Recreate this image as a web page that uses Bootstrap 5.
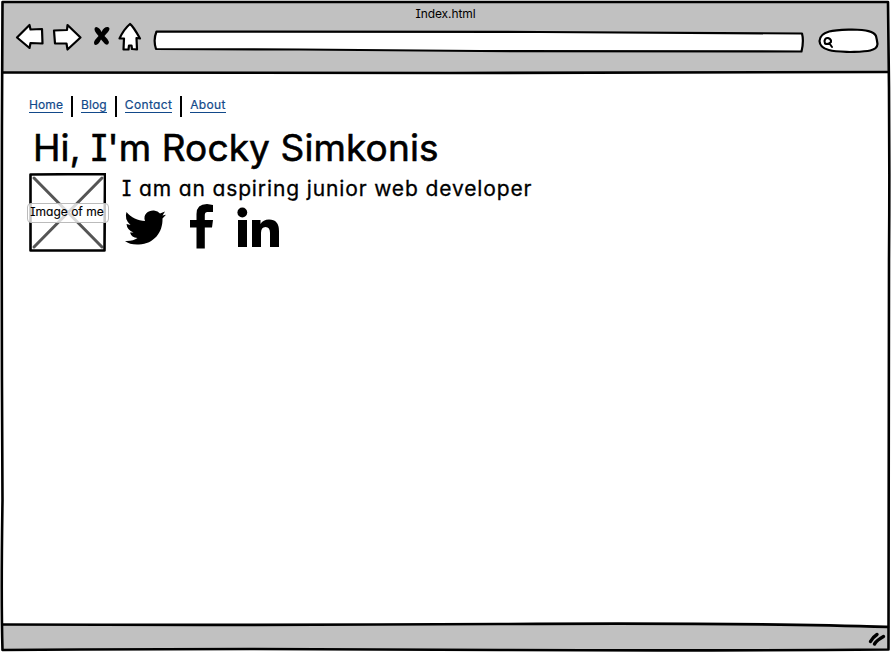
<!DOCTYPE html>
<html lang="en">
<head>
<meta charset="utf-8">
<meta name="viewport" content="width=device-width, initial-scale=1">
<title>Index.html</title>
<link href="https://cdn.jsdelivr.net/npm/bootstrap@5.3.0/dist/css/bootstrap.min.css" rel="stylesheet">
<style>
body{font-family:Inter,Lato,sans-serif;font-feature-settings:"cv11","cv08";color:#000;width:891px;height:652px;overflow:hidden;background:#fff}
svg{display:block;flex:none}
.ink{fill:none;stroke:#000;stroke-width:2.6;stroke-linejoin:round;stroke-linecap:round}
.paper{fill:#fff;stroke:#000;stroke-width:2.2;stroke-linejoin:round}
.lens{stroke-width:2}
.chrome-top{height:73px;background:#c1c1c1;padding:5px 0 0 14px}
.chrome-bottom{height:27px;background:#c1c1c1;padding:6px 4px 0 0}
.tab-title{font-size:12px;line-height:17px;letter-spacing:-.1px;margin-right:14px}
.page{padding:23px 27px 0 29px}
.site-nav{height:21px;font-size:12px;line-height:14px;-webkit-text-stroke:.2px #12498a}
.site-nav a{color:#12498a;text-decoration:none;border-bottom:1px solid #12498a;margin-top:2px;letter-spacing:.1px}
.site-nav a:nth-of-type(3){letter-spacing:.36px}
.site-nav a:nth-of-type(4){letter-spacing:.3px}
.bar{width:2px;height:21px;background:#000;margin:0 8px}
.headline{font-size:37px;line-height:44px;font-weight:400;letter-spacing:.12px;-webkit-text-stroke:.6px #000;margin:9px 0 3px 4px;white-space:nowrap}
.tagline{font-size:21px;line-height:31px;letter-spacing:.87px;-webkit-text-stroke:.3px #000;margin:0;white-space:nowrap}
.photo{width:77px;height:79px}
.photo-label{left:-2px;top:30px;width:82px;height:20px;border:1px solid #bbb;border-radius:4px;background:rgba(255,255,255,.78);font-size:12px;line-height:16px;padding-right:2px;-webkit-text-stroke:.15px #000;white-space:nowrap}
</style>
<script src="https://cdn.jsdelivr.net/npm/bootstrap@5.3.0/dist/js/bootstrap.bundle.min.js"></script>
</head>
<body class="position-relative d-flex flex-column">
<header class="chrome-top">
  <div class="tab-title text-center">Index.html</div>
    <svg width="870" height="34" viewBox="14 22 870 34">
      <path class="paper" d="M17 37.500 L29.500 25 L30.500 29.500 L42 29 L42.500 43.500 L30.500 43 L29.500 48 Z"/>
      <path class="paper" d="M54 30.500 L67 30 L67.500 25 L80.500 37.500 L67.500 49.500 L66.500 43.500 L55 43.500 Z"/>
      <path d="M96.500 27 Q100 28 101.500 32 Q104 26.500 108 27 Q111 28 108 32 Q105.500 34.500 104.500 36 Q107 38 109 42 Q108.500 46 105 44 L101 39.500 Q98.500 45 95 45 Q93 43 95 40 L98.500 36 Q93 30 95 27.500 Z"/>
      <path class="paper" d="M130 24 Q133 26 140 38.500 L136.500 38 L137 49.500 L132 49 L131.500 45.500 L129 45.500 L128.500 49.500 L123.500 49.500 L124 38.500 L119.500 38.500 Q124 29 130 24 Z"/>
      <path class="paper" d="M156.500 31.500 L540 32 L802 33.500 Q804 41 801.500 51.500 L480 51 L300 49.500 L156 49 Q153 40 156.500 31.500 Z"/>
      <path class="paper" d="M819.500 41 C820 29.500 838 30 852 29.500 C866 30 874 31 876 36 Q877 40 877.500 44 C877 52 864 51.500 850 52 C838 51.500 820 52 819.500 41 Z"/>
      <path class="ink lens" d="M824.500 41 Q825 37.700 828 38 Q831.500 39 831 42 Q828 45 825 43.500 Z M829.500 43.500 L832 47"/>
    </svg>
</header>
<main class="page flex-grow-1">
  <nav class="site-nav d-flex align-items-start">
    <a href="#">Home</a><span class="bar"></span>
    <a href="#">Blog</a><span class="bar"></span>
    <a href="#">Contact</a><span class="bar"></span>
    <a href="#">About</a>
  </nav>
  <h1 class="headline">Hi, I'm Rocky Simkonis</h1>
  <div class="d-flex">
    <div class="photo position-relative">
      <svg width="77" height="79" viewBox="29 173 77 79"><path d="M34 178 L102 247 M102 178 L34 247" stroke="#555" stroke-width="3" stroke-linecap="round"/><path class="ink" d="M30.500 174.500 L105 174 L104.500 250.500 L30.500 250.500 Z"/></svg>
      <div class="photo-label position-absolute text-center">Image of me</div>
    </div>
    <div class="ms-3">
      <p class="tagline">I am an aspiring junior web developer</p>
      <svg width="160" height="50" viewBox="122 204 160 50">
        <path d="M126.500 212 C131 218 138 220.500 145 221 C142.500 214 149 210 154 210.500 Q158 211 160 213.500 L165 211.500 L162.500 215.500 L166 214.800 L162.500 218.500 C163 232 154 244 139 244.500 Q130 245 125 241 Q133 241.500 137.500 238 Q131.500 237.500 130 232.500 L133.500 232.500 Q127 230 126.500 224 L130.500 225 Q124 219 126.500 212 Z"/>
        <path d="M213 205 L213 212 L207.500 212 Q204.800 212 204.800 215 L204.800 220 L213 220 L212 227.500 L204.800 227.500 L204.800 248.500 L196.500 248.500 L196.500 227.500 L190 227.500 L190 220 L196.500 220 L196.500 214 Q196.500 204 207 204 Z"/>
        <circle cx="242.300" cy="212.500" r="4.900"/>
        <path d="M238 220 H247 V247 H238 Z M252 220 H260.500 V224 Q263 219.500 269 219.500 Q279 219.500 279 231 V247 H270 V233 Q270 227 265.500 227 Q261 227 261 233 V247 H252 Z"/>
      </svg>
    </div>
  </div>
</main>
<footer class="chrome-bottom d-flex justify-content-end">
  <svg width="20" height="18" viewBox="867 631 20 18"><path d="M870.500 641.500 Q873 637 877 634.500 M874.500 644 Q877 640 883.500 636.500" fill="none" stroke="#000" stroke-width="3.400" stroke-linecap="round"/></svg>
</footer>
<svg class="position-absolute top-0 start-0 pe-none" width="891" height="652" viewBox="0 0 891 652">
  <path d="M0 0 H891 V652 H0 Z M2.500 2 L3 400 L3 650 L888 650 L889 260 L888 2 Z" fill="#fff" fill-rule="evenodd"/>
  <path class="ink" d="M2.500 2 L888 2 Q890 130 889 260 L888.500 649.500 Q700 651 500 650 L250 649 L80 649.500 L2.500 650 Q1 600 2.500 500 Q1 250 2.500 2 Z"/>
  <path class="ink" d="M2.500 72.500 Q250 73.300 450 73 T888 72 M2.500 624.500 Q250 625.500 500 624 T888 627"/>
</svg>
</body>
</html>
